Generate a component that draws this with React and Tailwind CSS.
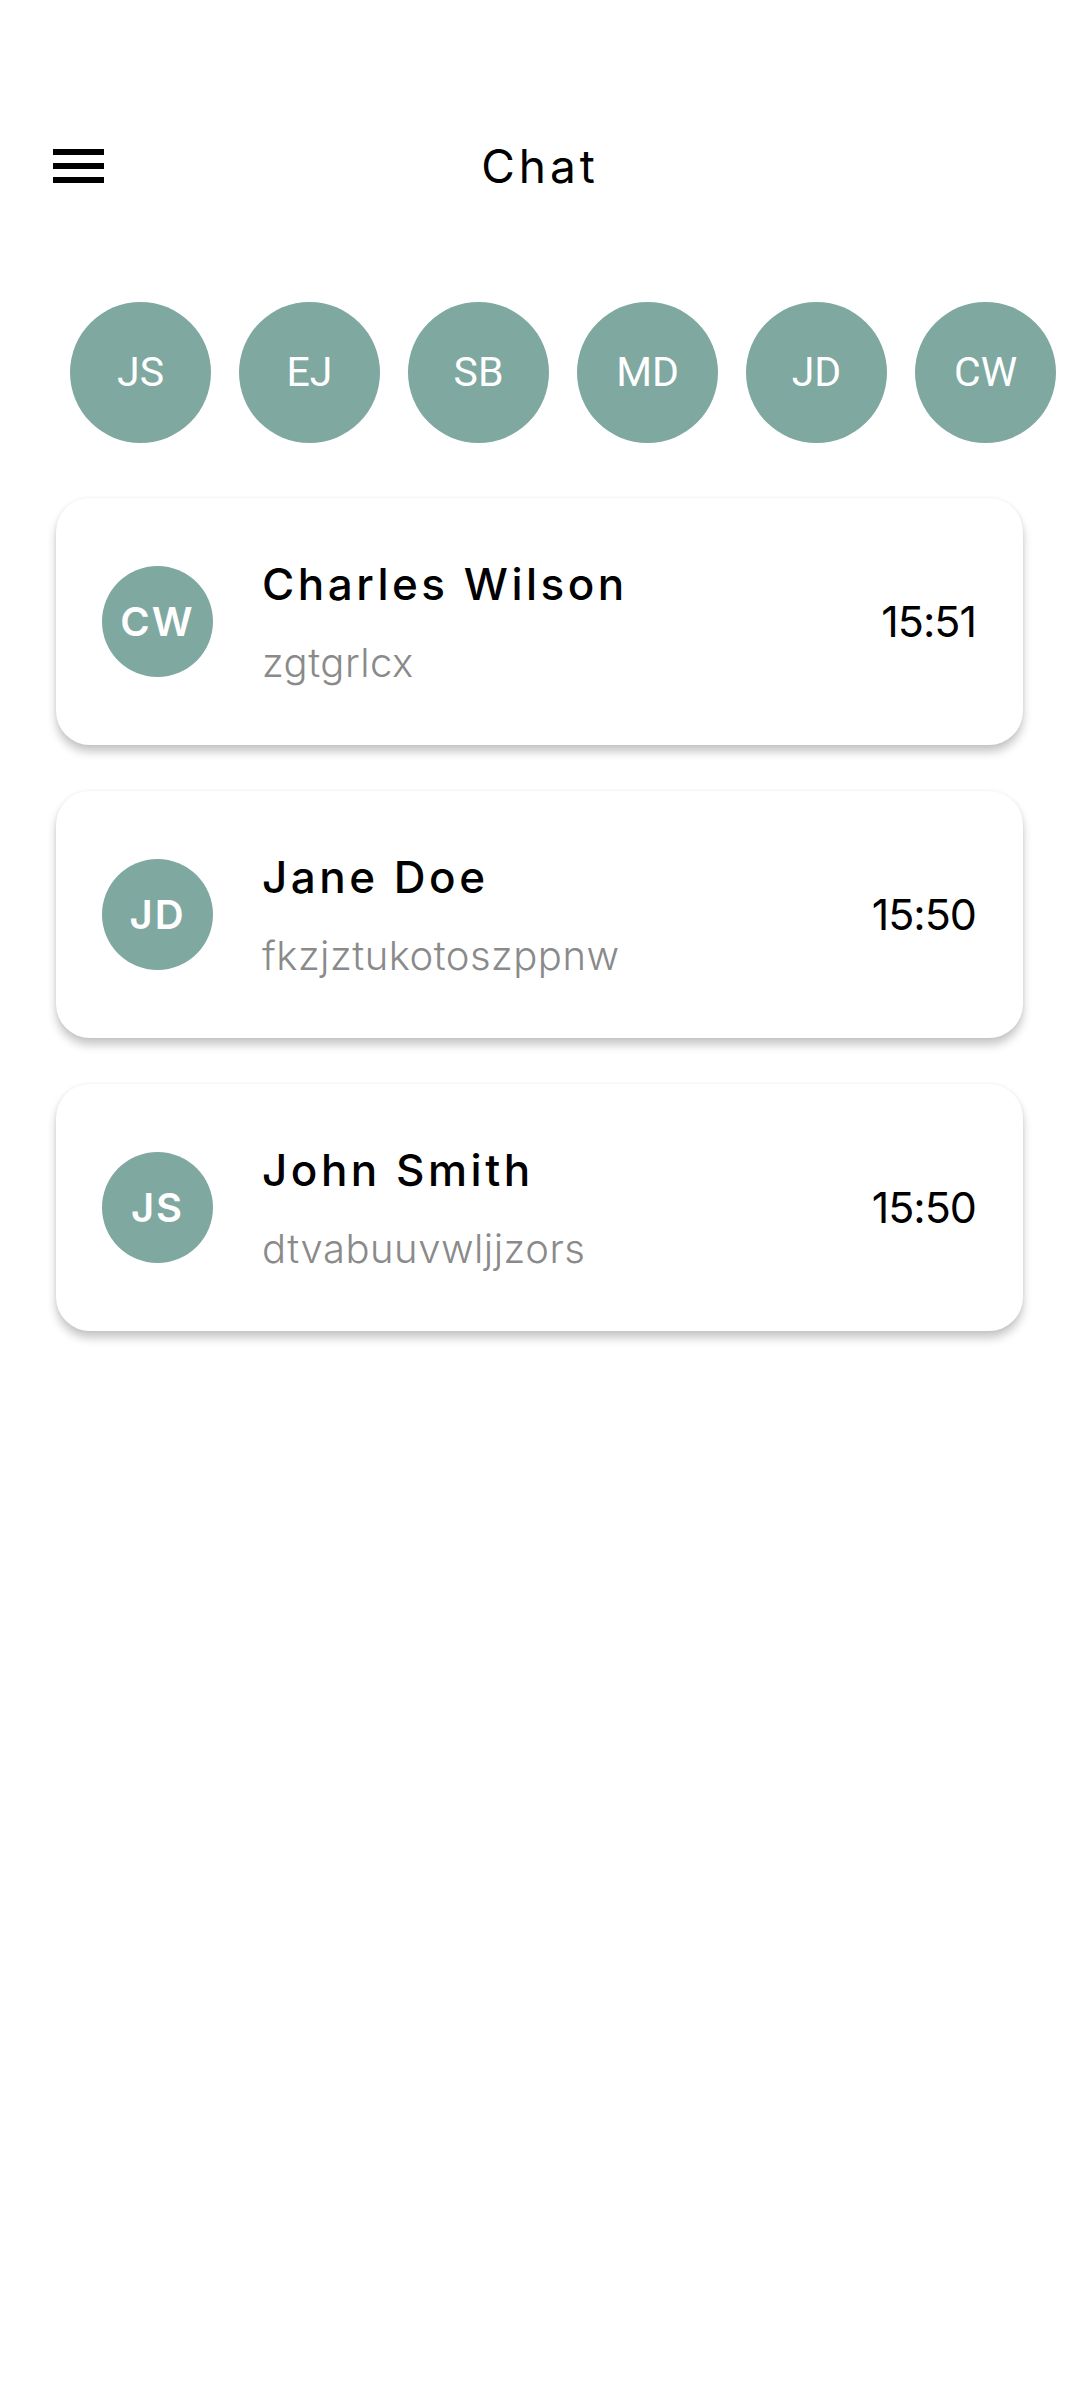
import React from "react";

const people = ["JS", "EJ", "SB", "MD", "JD", "CW"];

const chats = [
  { initials: "CW", name: "Charles Wilson", last: "zgtgrlcx", time: "15:51" },
  { initials: "JD", name: "Jane Doe", last: "fkzjztukotoszppnw", time: "15:50" },
  { initials: "JS", name: "John Smith", last: "dtvabuuvwljjzors", time: "15:50" },
];

function MenuIcon() {
  return (
    <svg width="51" height="34" viewBox="0 0 51 34" fill="#000">
      <rect x="0" y="0" width="51" height="6" />
      <rect x="0" y="14" width="51" height="6" />
      <rect x="0" y="28" width="51" height="6" />
    </svg>
  );
}

export default function App() {
  return (
    <div className="min-h-screen bg-white pt-[132px] font-['Inter',sans-serif] text-black">
      {/* header */}
      <div className="grid h-[68px] grid-cols-[1fr_auto_1fr] items-center">
        <div className="pl-[53px]">
          <MenuIcon />
        </div>
        <h1 className="text-[46px] leading-none font-normal tracking-[4px]">Chat</h1>
        <div />
      </div>

      {/* contacts row */}
      <div className="mt-[102px] flex gap-[28px] overflow-hidden pl-[70px]">
        {people.map((p) => (
          <div
            key={p}
            className="flex h-[141px] w-[141px] shrink-0 items-center justify-center rounded-full bg-[#7ea8a0] font-['Roboto',sans-serif] text-[41px] text-white"
          >
            {p}
          </div>
        ))}
      </div>

      {/* chat list */}
      <div className="ml-[56px] mt-[55px] flex w-[967px] flex-col gap-[46px]">
        {chats.map((c) => (
          <div
            key={c.name}
            className="flex h-[247px] items-center rounded-[34px] bg-white pl-[46px] pr-[47px] shadow-[0_7px_10px_rgba(0,0,0,0.22),0_0_4px_rgba(0,0,0,0.06)]"
          >
            <div className="flex h-[111px] w-[111px] shrink-0 items-center justify-center rounded-full bg-[#7ea8a0] text-[40px] font-semibold tracking-[2px] text-white">
              {c.initials}
            </div>
            <div className="ml-[49px] flex flex-1 flex-col gap-[27px] pt-[4px]">
              <div className="text-[44px] leading-[52px] font-medium tracking-[3.5px]">
                {c.name}
              </div>
              <div className="text-[40px] leading-[52px] font-light tracking-[0.5px] text-[#8a8a8a]">
                {c.last}
              </div>
            </div>
            <div className="text-[43px] leading-none tracking-[-1px]">{c.time}</div>
          </div>
        ))}
      </div>
    </div>
  );
}
